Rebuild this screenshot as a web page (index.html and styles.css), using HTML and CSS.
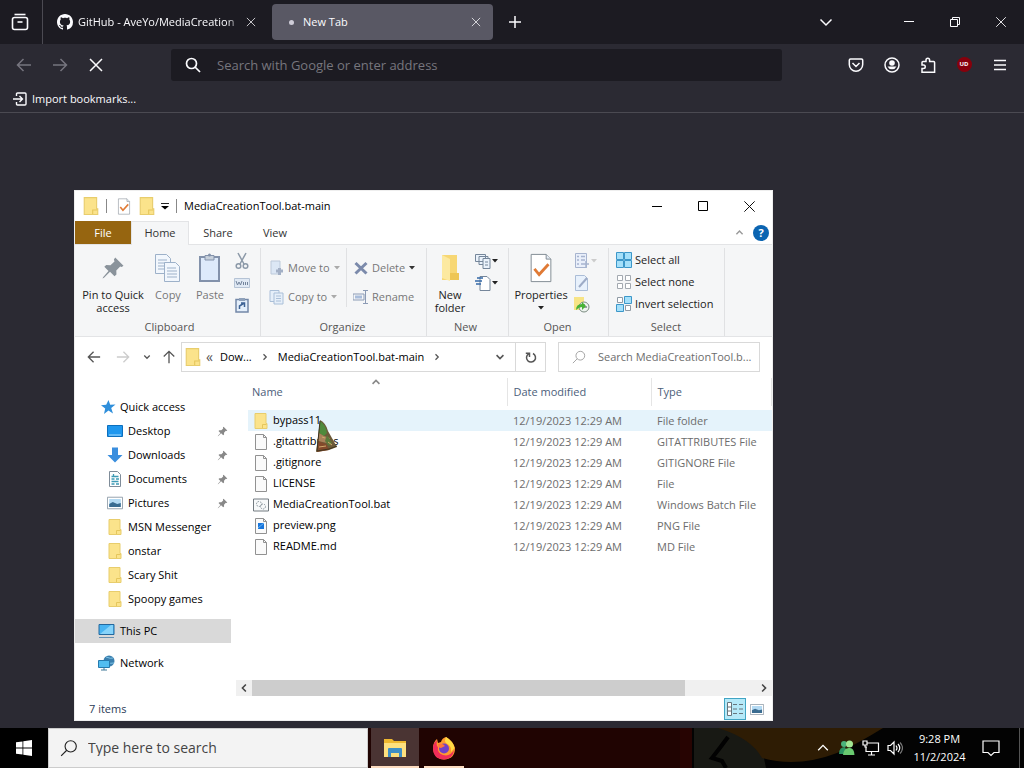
FILE: index.html
```html
<!DOCTYPE html>
<html lang="en">
<head>
    <meta charset="UTF-8">
    <meta name="viewport" content="width=device-width, initial-scale=1.0">
    <title>New Tab</title>
    <link rel="stylesheet" href="styles.css">
</head>
<body>
    <!-- Shared icons -->
    <svg class="sprite" aria-hidden="true">
        <symbol id="folder" viewBox="0 0 16 16"><path d="M2 .5h11v10h1v5H2z" fill="#fbe38b" stroke="#e8cd6c"/><path d="M9.500 15v-3.500h4" fill="none" stroke="#e5c65c"/></symbol>
        <symbol id="file" viewBox="0 0 16 16"><path d="M2.500.5h8l3 3v12h-11z" fill="#fafafa" stroke="#919191"/><path d="M10.500.5v3h3" fill="none" stroke="#919191"/></symbol>
        <symbol id="pin" viewBox="0 0 16 16"><path d="M9.500 1L15 6.500l-1.200.8-1-.3-2.600 2.700.1 2.600-1.300 1.200-3-3L2 14.500l-1 .5.500-1L5 10 2.200 7.200 3.500 6l2.800.2L9 3.600l-.4-1.300z"/></symbol>
        <symbol id="close" viewBox="0 0 16 16"><path d="M2.500 2.500l11 11m0-11l-11 11" fill="none" stroke="currentColor"/></symbol>
        <symbol id="arrow" viewBox="0 0 16 16"><path d="M15 8H1.500M7.500 2l-6 6 6 6" fill="none" stroke="currentColor" stroke-width="1.500"/></symbol>
        <symbol id="chevron" viewBox="0 0 16 16"><path d="M2.500 5.500L8 11l5.500-5.500" fill="none" stroke="currentColor" stroke-width="1.500"/></symbol>
        <symbol id="chevron-bold" viewBox="0 0 16 16"><path d="M2.500 5L8 10.500 13.500 5" fill="none" stroke="currentColor" stroke-width="2.500"/></symbol>
        <symbol id="lens" viewBox="0 0 16 16"><circle cx="9.500" cy="6.500" r="5" fill="none" stroke="currentColor"/><path d="M6 10l-5 5" stroke="currentColor"/></symbol>
        <symbol id="check" viewBox="0 0 24 32"><path d="M1.500 1.500h16l5 5v24h-21z" fill="#fff" stroke="#7d8790"/><path d="M17.500 1.500v5h5" fill="#e4ecf5" stroke="#7d8790"/><path d="M5 17l5 6 10-11" fill="none" stroke="#e07a35" stroke-width="3"/></symbol>
        <symbol id="caret" viewBox="0 0 6 4"><path d="M0 0h6L3 3.500z" fill="currentColor"/></symbol>
        <symbol id="picture" viewBox="0 0 18 14"><path d="M.5.5h17v13H.5z" fill="#fff" stroke="#8b98a5"/><path d="M2.500 2.500h13v9h-13z" fill="#b4daf3"/><path d="M2.500 8l4-2 5 2 4-1v4.500h-13z" fill="#3a6c91"/></symbol>
    </svg>

    <main class="desktop">
        <!-- Browser -->
        <section class="browser">
            <div class="tabbar">
                <button class="view-btn" aria-label="Firefox View"><svg width="18" height="18" viewBox="0 0 18 18" fill="none" stroke="currentColor" stroke-width="1.600"><path d="M3.500 1.500h11"/><rect x="1.500" y="4.500" width="15" height="12" rx="2"/><path d="M6.500 9h5"/></svg></button>
                <div class="tab">
                    <svg width="16" height="16" viewBox="0 0 16 16"><path fill="#fbfbfe" d="M8 0C3.580 0 0 3.580 0 8c0 3.540 2.290 6.530 5.470 7.590.4.070.55-.17.55-.38 0-.19-.01-.82-.01-1.490-2.010.37-2.530-.49-2.690-.94-.09-.23-.48-.94-.82-1.130-.28-.15-.68-.52-.01-.53.63-.01 1.080.58 1.230.82.72 1.210 1.870.87 2.330.66.07-.52.28-.87.51-1.070-1.780-.2-3.640-.89-3.640-3.950 0-.87.31-1.590.82-2.150-.08-.2-.36-1.020.08-2.120 0 0 .67-.21 2.200.82.64-.18 1.320-.27 2-.27s1.360.09 2 .27c1.530-1.040 2.200-.82 2.200-.82.44 1.100.16 1.920.08 2.120.51.56.82 1.270.82 2.150 0 3.070-1.870 3.750-3.650 3.950.29.25.54.73.54 1.480 0 1.070-.01 1.930-.01 2.200 0 .21.15.46.55.38A8 8 0 0 0 16 8c0-4.420-3.580-8-8-8z"/></svg>
                    <span class="tab-name fade">GitHub - AveYo/MediaCreation</span>
                    <button aria-label="Close tab"><svg width="12" height="12"><use href="#close"/></svg></button>
                </div>
                <div class="tab active">
                    <span class="dot"></span>
                    <span class="tab-name">New Tab</span>
                    <button aria-label="Close tab"><svg width="12" height="12"><use href="#close"/></svg></button>
                </div>
                <button class="new-tab" aria-label="New tab"><svg width="14" height="14" viewBox="0 0 14 14" stroke="currentColor" stroke-width="1.500"><path d="M7 1v12M1 7h12"/></svg></button>
                <button class="list-tabs" aria-label="List all tabs"><svg width="16" height="16"><use href="#chevron"/></svg></button>
                <div class="browser-controls">
                    <button aria-label="Minimize"><svg width="10" height="10" viewBox="0 0 10 10" stroke="currentColor"><path d="M0 4.500h10"/></svg></button>
                    <button aria-label="Restore"><svg width="10" height="10" viewBox="0 0 10 10" fill="none" stroke="currentColor"><path d="M.5 2.500h7v7h-7zM2.500 2V.5h7v7H8"/></svg></button>
                    <button aria-label="Close"><svg width="14" height="14"><use href="#close"/></svg></button>
                </div>
            </div>
            <div class="toolbar">
                <button class="dim" aria-label="Back"><svg width="16" height="16"><use href="#arrow"/></svg></button>
                <button class="dim flip" aria-label="Forward"><svg width="16" height="16"><use href="#arrow"/></svg></button>
                <button aria-label="Stop"><svg width="16" height="16" viewBox="0 0 16 16" stroke="currentColor" stroke-width="1.500"><path d="M2 2l12 12M14 2L2 14"/></svg></button>
                <label class="urlbar">
                    <svg width="16" height="16" viewBox="0 0 16 16" fill="none" stroke="currentColor" stroke-width="1.700"><circle cx="6.500" cy="6.500" r="5"/><path d="M10 10l5 5"/></svg>
                    <input type="text" aria-label="Address" placeholder="Search with Google or enter address">
                </label>
                <div class="tools">
                    <button aria-label="Pocket"><svg width="16" height="16" viewBox="0 0 16 16" fill="none" stroke="currentColor" stroke-width="1.500"><path d="M2.500 2h11a1.200 1.200 0 0 1 1.200 1.200V7.500a6.700 6.700 0 0 1-13.400 0V3.200A1.200 1.200 0 0 1 2.500 2zM4.500 6L8 9.500 11.500 6"/></svg></button>
                    <button aria-label="Account"><svg width="16" height="16" viewBox="0 0 16 16"><circle cx="8" cy="8" r="7" fill="none" stroke="currentColor" stroke-width="1.500"/><circle cx="8" cy="6" r="2.800" fill="currentColor"/><path d="M3.500 9.500h9a5 5 0 0 1-9 0z" fill="currentColor"/></svg></button>
                    <button aria-label="Extensions"><svg width="16" height="16" viewBox="0 0 16 16" fill="none" stroke="currentColor" stroke-width="1.500"><path d="M2 15.200V11.500h1.500a1.700 1.700 0 0 0 0-3.500H2V5.500q0-1 1-1h3V3a1.800 1.800 0 0 1 3.600 0v1.500h4q1 0 1 1v9.700z"/></svg></button>
                    <button aria-label="uBlock Origin"><span class="ublock">UD</span></button>
                    <button aria-label="Menu"><svg width="14" height="14" viewBox="0 0 14 14" stroke="currentColor" stroke-width="1.500"><path d="M1 2.500h12M1 7h12M1 11.500h12"/></svg></button>
                </div>
            </div>
            <div class="bookmarks">
                <button><svg width="16" height="16" viewBox="0 0 16 16" fill="none" stroke="currentColor" stroke-width="1.400"><path d="M4.500 5V3q0-1 1-1h7.500q1 0 1 1v10q0 1-1 1H5.500q-1 0-1-1v-2M1 8h9M7.500 5l3 3-3 3"/></svg>Import bookmarks...</button>
            </div>
        </section>

        <!-- File Explorer -->
        <section class="explorer">
            <header class="titlebar">
                <svg width="18" height="18"><use href="#folder"/></svg>
                <i class="bar"></i>
                <svg class="props" width="14" height="17"><use href="#check"/></svg>
                <svg width="18" height="18"><use href="#folder"/></svg>
                <svg class="quick-caret" width="8" height="8" viewBox="0 0 8 8"><path d="M0 1.500h8" stroke="#222"/><path d="M0 4h8L4 7.500z"/></svg>
                <i class="bar"></i>
                <h1>MediaCreationTool.bat-main</h1>
                <div class="window-controls">
                    <button aria-label="Minimize"><svg width="10" height="10" viewBox="0 0 10 10" stroke="currentColor"><path d="M0 5.500h10"/></svg></button>
                    <button aria-label="Maximize"><svg width="10" height="10" viewBox="0 0 10 10" fill="none" stroke="currentColor"><path d="M.5.5h9v9h-9z"/></svg></button>
                    <button aria-label="Close"><svg width="15" height="15"><use href="#close"/></svg></button>
                </div>
            </header>
            <nav class="menu">
                <button class="file">File</button>
                <button class="current">Home</button>
                <button>Share</button>
                <button>View</button>
                <svg class="collapse" width="9" height="9"><use href="#chevron-bold"/></svg>
                <button class="help" aria-label="Help">?</button>
            </nav>

            <div class="ribbon">
                <div class="group clipboard">
                    <div class="tools-row">
                        <button class="big pin-btn"><svg width="24" height="24" fill="#8a939b"><use href="#pin"/></svg><span>Pin to Quick access</span></button>
                        <button class="big off"><svg width="28" height="30" viewBox="0 0 28 30" fill="#f2f7fd" stroke="#9db1c9"><path d="M1.500 1.500h11l4 4v15h-15z"/><path d="M4 7h9M4 10h9M4 13h9M4 16h9"/><path d="M10.500 9.500h11l4 4v15h-15z"/><path d="M13 15h9M13 18h10M13 21h10M13 24h10"/></svg><span>Copy</span></button>
                        <button class="big off"><svg width="24" height="30" viewBox="0 0 24 30"><path d="M2 4h19v24H2z" fill="#ddeafb" stroke="#8392ab" stroke-width="2"/><path d="M7 2.500h9V7H7z" fill="#c7d0db" stroke="#8392ab"/><circle cx="11.500" cy="2" r="1.500" fill="#8392ab"/></svg><span>Paste</span></button>
                        <div class="minis">
                            <button aria-label="Cut"><svg width="16" height="18" viewBox="0 0 16 18" fill="none" stroke="#8c99a8" stroke-width="1.500"><path d="M4 1l6 11M12 1L6 12"/><circle cx="4.500" cy="14" r="2.300"/><circle cx="11.500" cy="14" r="2.300"/></svg></button>
                            <button aria-label="Copy path"><svg width="16" height="10" viewBox="0 0 16 10"><path d="M.5.5h15v9H.5z" fill="#e0e9f4" stroke="#b5c3d5"/><path d="M2 3l1.500 4L5 4l1.500 3L8 3m1.500 1v3m2-3v3m2-3v3" fill="none" stroke="#73849c"/></svg></button>
                            <button aria-label="Paste shortcut"><svg width="14" height="16" viewBox="0 0 14 16"><path d="M1 2.500h12v12.500H1z" fill="#e4effb" stroke="#7388a8" stroke-width="1.500"/><path d="M4 1h6v3H4z" fill="#8fa1ba"/><path d="M4.500 12V9l4-2.500M6 6h3.500v4" fill="none" stroke="#3e6395" stroke-width="1.500"/></svg></button>
                        </div>
                    </div>
                    <h2>Clipboard</h2>
                </div>
                <div class="group organize">
                    <div class="tools-row">
                        <div class="stack">
                            <button class="off"><svg width="16" height="16" viewBox="0 0 16 16"><path d="M2 1h9v13H2z" fill="#dce7f5" stroke="#bcc9da"/><path d="M7 11h7M10.500 8v7" stroke="#a3b0c6" stroke-width="3"/></svg>Move to<svg class="caret" width="6" height="4"><use href="#caret"/></svg></button>
                            <button class="off"><svg width="16" height="16" viewBox="0 0 16 16" fill="#e6eff9" stroke="#aabfd8"><path d="M1 1.500h9v11H1z"/><path d="M5 4h9v11H5zM7 7h5M7 9.500h5M7 12h5"/></svg>Copy to<svg class="caret" width="6" height="4"><use href="#caret"/></svg></button>
                        </div>
                        <div class="stack second">
                            <button class="off"><svg width="16" height="16" viewBox="0 0 16 16"><path d="M2.500 3l11 10.500M13.500 3l-11 10.500" stroke="#7b8aab" stroke-width="3"/></svg>Delete<svg class="caret dark" width="6" height="4"><use href="#caret"/></svg></button>
                            <button class="off"><svg width="16" height="16" viewBox="0 0 16 16" fill="none" stroke="#8c9bb5"><path d="M0 5h11v6H0zM10 1.500h5M12.500 1.500v13M10 14.500h5"/><path d="M2 8h7" stroke-width="3" stroke="#a9bddb"/></svg>Rename</button>
                        </div>
                    </div>
                    <h2>Organize</h2>
                </div>
                <div class="group new">
                    <div class="tools-row">
                        <button class="big"><svg width="24" height="30" viewBox="0 0 24 30"><path d="M4 2h15v18h2v7H4z" fill="#f7d774"/><path d="M4 2l8 4v22l-8-3z" fill="#fce9a0"/><path d="M12 20h9v7h-9z" fill="#eec655"/></svg><span>New folder</span></button>
                        <div class="minis wide">
                            <button aria-label="New item"><svg width="16" height="16" viewBox="0 0 16 16" fill="#eaf2fb" stroke="#75869a"><path d="M.5 1.500h10v7H.5zM4 3.500h9v8H4z"/><path d="M8 5.500h7v10H8zM10 9h3M10 12h3"/></svg><svg width="6" height="4"><use href="#caret"/></svg></button>
                            <button aria-label="Easy access"><svg width="16" height="16" viewBox="0 0 16 16" fill="#fff" stroke="#75869a"><path d="M5 1.500h7l3 3v11H5z"/><path d="M2 3h6M0 6h7M1 9h5" stroke="#3569a8" stroke-width="1.500"/></svg><svg width="6" height="4"><use href="#caret"/></svg></button>
                        </div>
                    </div>
                    <h2>New</h2>
                </div>
                <div class="group open">
                    <div class="tools-row">
                        <button class="big"><svg width="24" height="30"><use href="#check"/></svg><span>Properties</span><svg width="6" height="4"><use href="#caret"/></svg></button>
                        <div class="minis wide">
                            <button class="faint" aria-label="Open"><svg width="16" height="16" viewBox="0 0 16 16" fill="#e9effa" stroke="#a7b4cf"><path d="M1.500.5h11v14h-11z"/><path d="M3 3.500h2M7 3.500h4M3 7h2M7 7h4M3 11h2M7 11h8M12 8v7" stroke-width="1.500"/></svg><svg width="6" height="4"><use href="#caret"/></svg></button>
                            <button aria-label="Edit"><svg width="16" height="16" viewBox="0 0 16 16"><path d="M1.500.5h9l3 3v12h-12z" fill="#e8f1fc" stroke="#abbdd7"/><path d="M5 12l8-9" stroke="#9dabc6" stroke-width="2"/></svg></button>
                            <button aria-label="History"><svg width="16" height="16" viewBox="0 0 16 16"><path d="M0 0h10v13H0z" fill="#f7e486"/><circle cx="10" cy="10" r="5" fill="#edf3ef" stroke="#7a8b80"/><path d="M10 7v3h3" fill="none" stroke="#445"/><path d="M2 13q0-6 6-6V5l4 4-4 4v-3q-3 0-6 3z" fill="#47b335"/></svg></button>
                        </div>
                    </div>
                    <h2>Open</h2>
                </div>
                <div class="group select">
                    <div class="stack tight">
                        <button><svg width="16" height="16" viewBox="0 0 16 16" fill="#a5e0fa" stroke="#3c97c9"><path d="M.5.5h7v7h-7zM8.500.5h7v7h-7zM.5 8.500h7v7h-7zM8.500 8.500h7v7h-7z"/></svg>Select all</button>
                        <button><svg width="16" height="16" viewBox="0 0 16 16" fill="#fff" stroke="#a3a9b0"><path d="M1.500 1.500h5v5h-5zM9.500 1.500h5v5h-5zM1.500 9.500h5v5h-5zM9.500 9.500h5v5h-5z"/></svg>Select none</button>
                        <button><svg width="16" height="16" viewBox="0 0 16 16" fill="#a5e0fa" stroke="#3c97c9"><path d="M8.500.5h7v7h-7zM.5 8.500h7v7h-7z"/><path d="M1.500 1.500h5v5h-5zM9.500 9.500h5v5h-5z" fill="#fff" stroke="#8f9aa5"/></svg>Invert selection</button>
                    </div>
                    <h2>Select</h2>
                </div>
            </div>

            <div class="address-row">
                <button aria-label="Back"><svg width="14" height="14"><use href="#arrow"/></svg></button>
                <button class="flip faint" aria-label="Forward"><svg width="14" height="14"><use href="#arrow"/></svg></button>
                <button class="recent" aria-label="Recent locations"><svg width="8" height="8"><use href="#chevron-bold"/></svg></button>
                <button class="up" aria-label="Up"><svg width="14" height="14"><use href="#arrow"/></svg></button>
                <div class="crumbs">
                    <svg width="18" height="18"><use href="#folder"/></svg>
                    <span class="laquo">«</span>
                    <a href="#">Dow...</a>
                    <svg class="sep" width="8" height="8"><use href="#chevron-bold"/></svg>
                    <a href="#">MediaCreationTool.bat-main</a>
                    <svg class="sep" width="8" height="8"><use href="#chevron-bold"/></svg>
                    <button class="drop" aria-label="Previous locations"><svg width="10" height="10"><use href="#chevron-bold"/></svg></button>
                    <button class="refresh" aria-label="Refresh"><svg width="12" height="14" viewBox="0 0 12 14" fill="none" stroke="currentColor" stroke-width="1.500"><path d="M8 3.500a4.500 4.500 0 1 1-4.500.3M4.500 7V3.200H.8"/></svg></button>
                </div>
                <label class="find">
                    <svg width="14" height="14"><use href="#lens"/></svg>
                    <input type="text" aria-label="Search folder" placeholder="Search MediaCreationTool.b...">
                </label>
            </div>

            <div class="content">
                <ul class="tree">
                    <li><svg width="16" height="16" viewBox="0 0 16 16"><path d="M8.500 1l1.700 4.800 5.300-.3-4.300 3.500 1.800 5.500-4.500-3-4.500 3.500 1.200-5.500L1 6.200l5.200-.4z" fill="#2f8fdb"/></svg>Quick access</li>
                    <li class="sub"><svg width="16" height="16" viewBox="0 0 16 16"><path d="M.5 2.500h15v11H.5z" fill="#1f97ee" stroke="#0c6fbd"/><path d="M2 12h12" stroke="#a7dcff"/></svg>Desktop<svg class="pinned" width="11" height="11"><use href="#pin"/></svg></li>
                    <li class="sub"><svg width="16" height="16" viewBox="0 0 16 16"><path d="M5 .5h6V8h4.500L8 15.500.5 8H5z" fill="#3a8ede"/></svg>Downloads<svg class="pinned" width="11" height="11"><use href="#pin"/></svg></li>
                    <li class="sub"><svg width="16" height="16" viewBox="0 0 16 16"><path d="M2.500.5h8l3 3v12h-11z" fill="#fff" stroke="#7f8c99"/><path d="M4.500 5.500h7M4.500 8h3M9 8h3M4.500 10.500h7M4.500 13h3M9 13h3M6.500 3v3" stroke="#3e9bb5" stroke-width="1.300"/></svg>Documents<svg class="pinned" width="11" height="11"><use href="#pin"/></svg></li>
                    <li class="sub"><svg width="16" height="16"><use href="#picture"/></svg>Pictures<svg class="pinned" width="11" height="11"><use href="#pin"/></svg></li>
                    <li class="sub"><svg width="16" height="16"><use href="#folder"/></svg>MSN Messenger</li>
                    <li class="sub"><svg width="16" height="16"><use href="#folder"/></svg>onstar</li>
                    <li class="sub"><svg width="16" height="16"><use href="#folder"/></svg>Scary Shit</li>
                    <li class="sub"><svg width="16" height="16"><use href="#folder"/></svg>Spoopy games</li>
                    <li class="root selected"><svg width="17" height="16" viewBox="0 0 17 16"><path d="M1 1.500h15v10H1z" fill="#48b4f2" stroke="#24689d"/><path d="M2 11L13 2h2v9z" fill="#86d3fa"/><path d="M1 14.500h15" stroke="#6991b1"/></svg>This PC</li>
                    <li class="root"><svg width="17" height="16" viewBox="0 0 17 16"><circle cx="11" cy="6" r="5.500" fill="#3a7fae"/><path d="M8 2q5 2 7 1M8 7q5 2 8 1" stroke="#81c5e8" fill="none"/><path d="M.5 5.500h11v7H.5z" fill="#52bdf0" stroke="#267aae"/><path d="M3 15h6M6 13v2" stroke="#417898"/></svg>Network</li>
                </ul>
                <div class="listing">
                    <table>
                        <thead>
                            <tr><th class="name">Name<svg class="sort" width="10" height="10"><use href="#chevron-bold"/></svg></th><th class="date">Date modified</th><th>Type</th></tr>
                        </thead>
                        <tbody>
                            <tr class="hover"><td><svg width="16" height="16"><use href="#folder"/></svg>bypass11</td><td>12/19/2023 12:29 AM</td><td>File folder</td></tr>
                            <tr><td><svg width="16" height="16"><use href="#file"/></svg>.gitattributes</td><td>12/19/2023 12:29 AM</td><td>GITATTRIBUTES File</td></tr>
                            <tr><td><svg width="16" height="16"><use href="#file"/></svg>.gitignore</td><td>12/19/2023 12:29 AM</td><td>GITIGNORE File</td></tr>
                            <tr><td><svg width="16" height="16"><use href="#file"/></svg>LICENSE</td><td>12/19/2023 12:29 AM</td><td>File</td></tr>
                            <tr><td><svg width="16" height="16" viewBox="0 0 16 16"><path d="M.5 2h15v12H.5z" fill="#f7f9fa" stroke="#727a80"/><g fill="none" stroke="#86929a"><circle cx="6" cy="7" r="2.500" stroke-dasharray="1.500 1"/><circle cx="10" cy="9.500" r="2.500" stroke-dasharray="1.500 1"/></g></svg>MediaCreationTool.bat</td><td>12/19/2023 12:29 AM</td><td>Windows Batch File</td></tr>
                            <tr><td><svg width="16" height="16" viewBox="0 0 16 16"><use href="#file"/><path d="M5 5h6v6H5z" fill="#1976dc"/><path d="M5 10l6-5" stroke="#69b5f4"/></svg>preview.png</td><td>12/19/2023 12:29 AM</td><td>PNG File</td></tr>
                            <tr><td><svg width="16" height="16"><use href="#file"/></svg>README.md</td><td>12/19/2023 12:29 AM</td><td>MD File</td></tr>
                        </tbody>
                    </table>
                    <div class="scrollbar">
                        <button class="left" aria-label="Scroll left"><svg width="10" height="10"><use href="#chevron-bold"/></svg></button>
                        <div class="track"><div class="thumb"></div></div>
                        <button class="right" aria-label="Scroll right"><svg width="10" height="10"><use href="#chevron-bold"/></svg></button>
                    </div>
                </div>
            </div>

            <footer class="status">
                <span>7 items</span>
                <button class="on" aria-label="Details"><svg width="16" height="14" viewBox="0 0 16 14" fill="#fff" stroke="#66757d"><path d="M.5.5h4v13h-4zM.5 5h4M.5 9h4M6 2.500h4M6 7h4M6 11.500h4M12 2.500h4M12 7h4M12 11.500h4"/></svg></button>
                <button aria-label="Large icons"><svg width="14" height="11"><use href="#picture"/></svg></button>
            </footer>

            <!-- Custom mouse pointer -->
            <svg class="pointer" width="26" height="34" viewBox="0 0 26 34"><path d="M5 1q6 3 8 11l9 16-8 3-13 2 2-15z" fill="#6c5a39"/><path d="M5 2q6 4 7 12l-3 3-5-3z" fill="#4f8a3c"/><path d="M4 14l5 3 6 2-3 5-9-2z" fill="#a9825a"/><path d="M12 16l5 8-3 3-4-5z" fill="#5c7a3a"/><path d="M3 22l8 3 3 6-12 2z" fill="#834a2b"/><path d="M5 2L2 32l12-2 8-3" fill="none" stroke="#40351f"/><path d="M7 18l3 1m3 4l4 3M4 28l7-1" stroke="#d1a86c"/></svg>
        </section>
    </main>

    <!-- Taskbar -->
    <footer class="taskbar">
        <svg class="wallpaper" viewBox="0 0 344 40" preserveAspectRatio="xMaxYMid slice" aria-hidden="true">
            <path d="M0 0h344v40H0z" fill="#030303"/>
            <path d="M0 0h12v40H0z" fill="#270402"/>
            <path d="M14 0h28q32 8 42 30l2 10H14z" fill="#181914"/>
            <path d="M38 0h165q-24 15-46 25-39 15-75 5Q71 10 38 0z" fill="#2e1c04"/>
            <path d="M48 9q-8 11-16 21l10 3 4 7" fill="none" stroke="#020202" stroke-width="4"/>
        </svg>
        <button class="start" aria-label="Start"><svg width="16" height="16" viewBox="0 0 16 16" fill="#fff"><path d="M0 2.300L6.500 1.400v6.200H0zM7.300 1.300L16 0v7.600H7.300zM0 8.400h6.500v6.200L0 13.700zM7.300 8.400H16V16l-8.700-1.300z"/></svg></button>
        <label class="search">
            <svg width="18" height="18"><use href="#lens"/></svg>
            <input type="text" aria-label="Search" placeholder="Type here to search">
        </label>
        <button class="app focused" aria-label="File Explorer"><svg width="22" height="20" viewBox="0 0 22 20"><path d="M0 1h8l2 2h12v16H0z" fill="#eeb82f"/><path d="M0 5h22v14H0z" fill="#fde07e"/><path d="M4 11q0-1 1-1h12q1 0 1 1v8h-3v-4H7v4H4z" fill="#3e8fc5"/></svg></button>
        <button class="app" aria-label="Firefox"><svg width="24" height="24" viewBox="0 0 24 24"><path d="M14 1q7 4 9 11 0 11-11 11.500Q2 23 1 13 1 6 5 3l1 4 3-1q1-4 5-5z" fill="#ff9a2e"/><path d="M1 12q0 11 11 11.500Q21 23 22 14q-4 7-11 5-6-2-5-8-2-1-1-7-4 3-4 8z" fill="#f02d58"/><path d="M14 1q7 4 8.500 11L19 16q1-6-5-9-2-2 0-6z" fill="#ffdb44"/><circle cx="12" cy="12.500" r="5" fill="#7140c8"/><path d="M6 8q5-1 7 2l-4 2q-3 0-3-4z" fill="#ff753a"/></svg></button>
        <div class="tray">
            <button aria-label="Show hidden icons"><svg class="flip-up" width="14" height="14"><use href="#chevron"/></svg></button>
            <button aria-label="Messenger"><svg width="16" height="16" viewBox="0 0 16 16"><circle cx="5" cy="4" r="3" fill="#4bb37b"/><path d="M0 14q0-7 6-7l3 7z" fill="#2b9362"/><circle cx="10.500" cy="4" r="3.500" fill="#a2e794"/><path d="M4 15q1-8 7-7 4 0 4.500 7z" fill="#69ca70"/></svg></button>
            <button aria-label="Network"><svg width="18" height="16" viewBox="0 0 18 16" fill="none" stroke="#fff" stroke-width="1.200"><path d="M5 3h11.500v8.500H4V7M9.500 12v3M6 15h7"/><path d="M1 1h4v4H1zM3 5v2h2"/></svg></button>
            <button aria-label="Volume"><svg width="16" height="16" viewBox="0 0 16 16" fill="none" stroke="#fff" stroke-width="1.200"><path d="M1 5.500h2.500L7 2v12l-3.500-3.500H1zM9 5.500q2 2.500 0 5M11 4q3.500 4 0 8"/><path d="M13 2.500q5 5.500 0 11" stroke="#777"/></svg></button>
            <time datetime="2024-11-02T21:28">9:28 PM<br>11/2/2024</time>
            <button class="notes" aria-label="Notifications"><svg width="18" height="18" viewBox="0 0 18 18" fill="none" stroke="#fff" stroke-width="1.200"><path d="M1 2h16v11.500h-5L9 16.500 6 13.500H1z"/></svg></button>
            <i class="peek"></i>
        </div>
    </footer>
</body>
</html>
```
FILE: styles.css
```css
* { box-sizing: border-box; }
body { margin: 0; min-height: 100vh; display: flex; flex-direction: column; font-family: "Open Sans", "Noto Sans", sans-serif; font-size: 11px; line-height: 16px; background: #2b2a33; color: #000; overflow: hidden; }
button, input { font: inherit; color: inherit; background: none; border: 0; padding: 0; margin: 0; }
button { display: flex; align-items: center; justify-content: center; flex: none; }
input { min-width: 0; flex: 1; outline: 0; text-overflow: ellipsis; }
svg { flex: none; }
.sprite { position: absolute; width: 0; height: 0; }
.desktop { position: relative; flex: 1; display: flex; flex-direction: column; }
.flip svg { transform: scaleX(-1); }
.flip-up, .collapse, .sort { transform: scaleY(-1); }

/* Browser */
.browser { color: #fbfbfe; }
.tabbar { display: flex; align-items: center; height: 44px; background: #1c1b22; }
.view-btn { width: 43px; height: 44px; padding-right: 2px; border-right: 1px solid #4b4a52; }
.tab { display: flex; align-items: center; width: 221px; height: 36px; margin-left: 4px; padding: 0 9px 0 10px; border-radius: 4px; }
.tab.active { background: #595864; padding-left: 17px; }
.tab-name { flex: 1; overflow: hidden; white-space: nowrap; margin-left: 5px; }
.tab.active .tab-name { margin-left: 9px; }
.tab button { width: 16px; height: 16px; }
.fade { mask-image: linear-gradient(to right, #000 90%, transparent); }
.dot { width: 5px; height: 5px; border-radius: 50%; background: #cfcdd8; }
.new-tab { width: 44px; height: 36px; }
.list-tabs { margin-left: auto; width: 40px; height: 36px; }
.browser-controls { display: flex; margin-left: 40px; }
.browser-controls button { width: 46px; height: 44px; }
.toolbar { display: flex; align-items: center; height: 41px; padding: 0 6px; }
.toolbar > button, .tools button { width: 36px; height: 32px; }
.dim { color: #76757f; }
.urlbar { display: flex; align-items: center; gap: 16px; flex: 1; height: 32px; margin: 0 56px 0 57px; padding: 0 14px; background: #1c1b22; border-radius: 3px; font-size: 13px; }
.urlbar input::placeholder { color: #77767e; opacity: 1; }
.tools { display: flex; }
.ublock { width: 15px; height: 15px; border-radius: 50%; background: #87000c; font-size: 6px; line-height: 15px; font-weight: bold; }
.bookmarks { display: flex; align-items: center; height: 28px; padding: 0 12px; border-bottom: 1px solid #4b4a52; }
.bookmarks button { gap: 4px; }

/* Explorer window */
.explorer { position: absolute; top: 190px; right: 251px; bottom: 7px; left: 74px; display: flex; flex-direction: column; background: #fff; border: 1px solid #eee; }
.titlebar { display: flex; align-items: center; height: 30px; padding-left: 7px; }
.titlebar h1 { margin: 0 0 0 6px; font-size: 11px; font-weight: normal; }
.bar { width: 1px; height: 14px; margin: 0 6px; background: #888; }
.props { margin: 0 7px 0 4px; }
.quick-caret { margin-left: 5px; }
.quick-caret + .bar { margin: 0 1px 0 7px; }
.window-controls { display: flex; margin-left: auto; }
.window-controls button { width: 46px; height: 30px; color: #000; }
.menu { display: flex; align-items: center; height: 24px; border-bottom: 1px solid #e3e4e6; }
.menu button { width: 56px; height: 23px; color: #333; }
.menu .file { background: #966510; color: #fff; }
.menu .current { width: 58px; height: 24px; background: #f5f6f7; border: 1px solid #e3e4e6; border-bottom: 0; }
.menu .current + button { width: 58px; }
.menu .collapse { margin-left: auto; color: #999; }
.menu .help { width: 16px; height: 16px; margin: 0 3px 0 9px; border-radius: 50%; background: #0b64b1; color: #fff; font-weight: bold; }

/* Ribbon */
.ribbon { display: flex; height: 92px; background: #f5f6f7; border-bottom: 1px solid #e3e4e6; padding-top: 3px; color: #222; }
.group { display: flex; flex-direction: column; justify-content: space-between; border-right: 1px solid #e0e1e3; }
.group h2 { margin: 0; font-size: 11px; line-height: 18px; font-weight: normal; text-align: center; color: #555; }
.tools-row { display: flex; }
.big { flex-direction: column; justify-content: flex-start; width: 42px; line-height: 13px; padding-top: 5px; gap: 5px; }
.pin-btn { width: 68px; padding: 8px 0 0; gap: 8px; }
.off { color: #777; }
.minis { display: flex; flex-direction: column; gap: 4px; padding-top: 4px; }
.minis button { width: 22px; height: 18px; }
.minis.wide button { justify-content: flex-start; gap: 1px; width: 26px; }
.clipboard { width: 186px; padding-left: 4px; }
.organize { width: 166px; padding-left: 8px; }
.organize h2 { padding-right: 10px; }
.stack { display: flex; flex-direction: column; align-items: flex-start; gap: 9px; padding-top: 10px; width: 77px; }
.stack button { gap: 3px; height: 20px; }
.caret { color: #aaa; margin-left: 1px; }
.caret.dark { color: #333; }
.stack.second { padding-left: 6px; border-left: 1px solid #e0e1e3; }
.new { width: 82px; padding-left: 2px; }
.new h2 { padding-right: 6px; }
.new .minis { margin-left: 4px; }
.open { width: 100px; padding-left: 4px; }
.open h2 { padding-right: 6px; }
.open .big { width: 56px; }
.open .minis { margin-left: 5px; }
.select { width: 116px; padding-left: 7px; }
.select h2 { padding-right: 8px; }
.stack.tight { gap: 2px; padding-top: 2px; width: auto; }

/* Address row */
.address-row { display: flex; align-items: center; height: 40px; padding: 0 12px 0 6px; color: #555; }
.address-row > button { width: 26px; height: 28px; }
.address-row .flip { margin-left: 3px; }
.address-row .recent { width: 21px; }
.address-row .up { width: 24px; }
.up svg { transform: rotate(90deg); }
.faint { color: #ccc; }
.crumbs { display: flex; align-items: center; flex: 1; height: 30px; padding-left: 2px; border: 1px solid #d9d9d9; white-space: nowrap; min-width: 0; }
.crumbs a { color: #000; text-decoration: none; }
.laquo { margin: 0 7px 0 4px; font-size: 14px; }
.sep { margin: 0 9px; transform: rotate(-90deg); }
.crumbs .drop { margin-left: auto; width: 30px; }
.refresh { width: 30px; height: 28px; border-left: 1px solid #d9d9d9; }
.find { display: flex; align-items: center; gap: 12px; width: 202px; height: 30px; margin-left: 12px; padding: 0 2px 0 13px; border: 1px solid #d9d9d9; color: #999; }
.find input::placeholder { color: #6d6d6d; opacity: 1; }

/* Folder contents */
.content { display: flex; flex: 1; min-height: 0; }
.tree { width: 156px; margin: 0 5px 0 0; padding: 18px 0 0; list-style: none; }
.tree li { display: flex; align-items: center; gap: 4px; height: 24px; padding: 0 3px 0 25px; white-space: nowrap; }
.tree li.sub { padding-left: 32px; gap: 5px; }
.tree li.root { margin-top: 8px; padding-left: 23px; gap: 5px; }
.tree .selected { background: #d9d9d9; }
.pinned { margin-left: auto; fill: #888; }
.listing { display: flex; flex: 1; flex-direction: column; min-width: 0; padding-top: 1px; }
table { width: calc(100% - 12px); margin-left: 12px; border-collapse: collapse; table-layout: fixed; }
th { position: relative; height: 28px; padding: 0 6px; font-weight: normal; text-align: left; color: #4c607a; border-right: 1px solid #e5e5e5; }
th.name { width: 259px; padding-left: 4px; }
th.date { width: 144px; }
thead::after { content: ""; display: block; height: 4px; }
.sort { position: absolute; top: -1px; left: 123px; color: #888; }
td { height: 21px; padding: 0 6px; color: #6d6d6d; white-space: nowrap; }
td:first-child { padding-left: 5px; color: #000; }
td svg { margin-right: 4px; vertical-align: middle; }
.hover { background: #e5f3fb; }
.scrollbar { display: flex; height: 16px; margin: auto 0 2px; background: #f0f0f0; }
.scrollbar button { width: 16px; height: 16px; color: #444; }
.left svg { transform: rotate(90deg); }
.right svg { transform: rotate(-90deg); }
.track { flex: 1; }
.thumb { width: 86%; height: 16px; background: #cdcdcd; }
.status { display: flex; align-items: center; height: 22px; padding: 0 4px 0 14px; color: #2a3a55; }
.status span { flex: 1; }
.status button { width: 22px; height: 22px; }
.status .on { background: #b5e9f8; border: 1px solid #41a5c4; }
.pointer { position: absolute; top: 228px; left: 240px; }

/* Taskbar */
.taskbar { position: relative; display: flex; height: 40px; background: #200402; color: #fff; }
.wallpaper { position: absolute; right: 0; top: 0; width: 344px; height: 40px; }
.start { width: 48px; background: #000; }
.search { display: flex; align-items: center; gap: 10px; width: 320px; margin-right: 3px; padding: 0 11px; background: #f3f3f3; border: 1px solid #ccc; color: #222; font-size: 14px; }
.search input::placeholder { color: #444; opacity: 1; }
.app { position: relative; width: 48px; }
.app::after { content: ""; position: absolute; right: 4px; bottom: 0; left: 4px; height: 2px; background: #fddcc0; }
.app.focused { margin-right: 1px; background: #4a3433; }
.app.focused::after { right: 0; left: 0; }
.tray { position: relative; display: flex; align-items: center; margin-left: auto; }
.tray button { width: 24px; height: 40px; }
.tray time { width: 65px; text-align: center; line-height: 18px; }
.tray .notes { width: 38px; }
.peek { width: 1px; height: 40px; margin: 0 4px 0 9px; background: #555; }
```
